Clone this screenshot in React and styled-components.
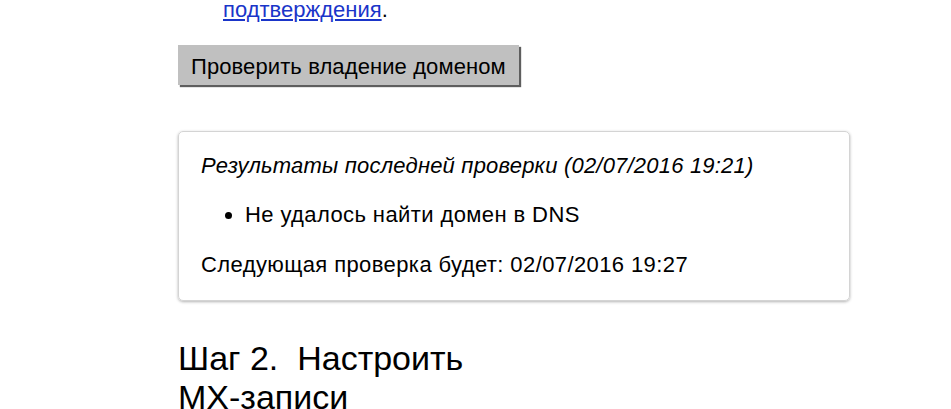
import styled, { createGlobalStyle } from 'styled-components';

const Global = createGlobalStyle`
  html, body {
    margin: 0;
    padding: 0;
    background: #fff;
  }
  body {
    font-family: "Liberation Sans", Arial, Helvetica, sans-serif;
    color: #000;
  }
`;

const Page = styled.div`
  width: 951px;
  height: 409px;
  overflow: hidden;
  padding-left: 178px;
  box-sizing: border-box;
`;

const Column = styled.div`
  width: 672px;
`;

const Intro = styled.p`
  margin: -3px 0 0;
  padding-left: 45px;
  font-size: 22px;
  line-height: 25px;
`;

const Link = styled.a`
  color: #1a35c9;
  text-decoration: underline;
`;

const CheckButton = styled.button`
  display: block;
  margin-top: 23px;
  height: 40px;
  padding: 4px 13px 0;
  font-family: inherit;
  font-size: 22px;
  letter-spacing: 0.1px;
  color: #000;
  background: #c0c0c0;
  border: none;
  box-shadow: 2px 2px 1px #5e5e5e;
  cursor: pointer;
`;

const Card = styled.section`
  margin-top: 46px;
  box-sizing: border-box;
  height: 170px;
  padding: 21px 22px;
  border: 1px solid #d4d4d4;
  border-radius: 5px;
  box-shadow: 0 1px 3px rgba(0, 0, 0, 0.3);
  font-size: 22px;
  letter-spacing: 0.4px;
`;

const Line = styled.p`
  margin: 0;
  line-height: 26px;
  font-style: ${(p) => (p.$italic ? 'italic' : 'normal')};
  letter-spacing: ${(p) => (p.$italic ? '0.2px' : '0.4px')};
`;

const List = styled.ul`
  margin: 23px 0 24px;
  padding-left: 44px;
  line-height: 26px;
`;

const Heading = styled.h2`
  margin: 38px 0 0;
  width: 300px;
  font-size: 34px;
  font-weight: normal;
  line-height: 39px;
`;

export default function App() {
  return (
    <Page>
      <Global />
      <Column>
        <Intro>
          <Link href="#">подтверждения</Link>.
        </Intro>
        <CheckButton>Проверить владение доменом</CheckButton>
        <Card>
          <Line $italic>Результаты последней проверки (02/07/2016 19:21)</Line>
          <List>
            <li>Не удалось найти домен в DNS</li>
          </List>
          <Line>Следующая проверка будет: 02/07/2016 19:27</Line>
        </Card>
        <Heading>Шаг 2.&nbsp;&nbsp;Настроить МХ-записи</Heading>
      </Column>
    </Page>
  );
}
